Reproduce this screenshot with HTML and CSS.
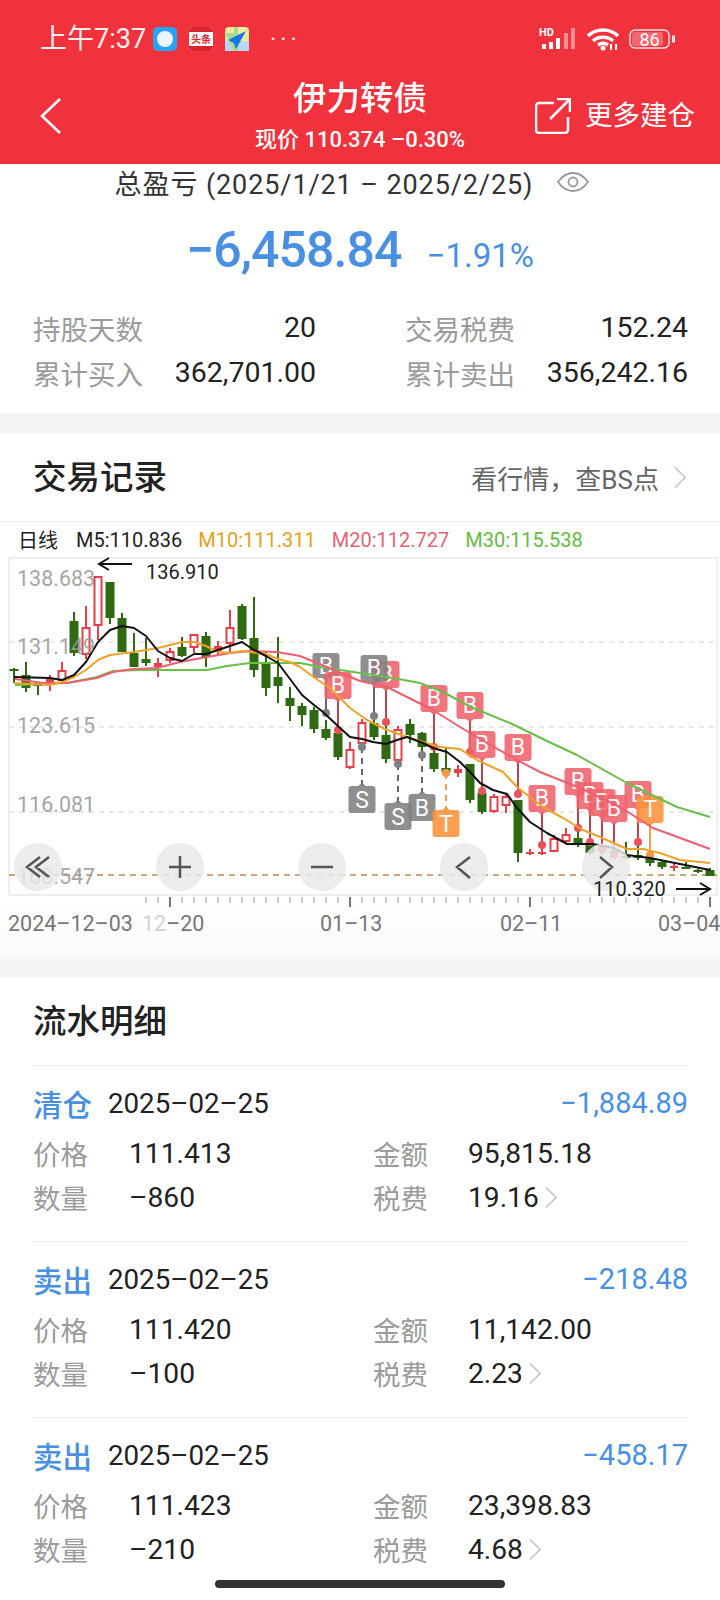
FILE: index.html
```html
<!DOCTYPE html>
<html lang="zh-CN">
<head>
<meta charset="utf-8">
<title>伊力转债</title>
<link rel="stylesheet" href="styles.css">
</head>
<body>
<header class="top">
  <div class="status">
    <span class="time">上午7:37</span>
    <svg class="app app-first" viewBox="0 0 24 24"><rect width="24" height="24" rx="5" fill="#29a3f5"/><circle cx="12" cy="12" r="8" fill="#eaf6ff"/></svg>
    <svg class="app" viewBox="0 0 24 24"><rect width="24" height="24" rx="4" fill="#fff"/><path class="tt" d="M0 4a4 4 0 0 1 4-4h16a4 4 0 0 1 4 4v1H0zM0 19h24v1a4 4 0 0 1-4 4H4a4 4 0 0 1-4-4z"/><text class="tt-label" x="12" y="16">头条</text></svg>
    <svg class="app" viewBox="0 0 24 24"><rect width="24" height="24" rx="4" fill="#f7e9a0"/><path d="M0 14h24v10H0z" fill="#b9d6f2"/><path d="M0 6l9 0 0-6 4 0 0 24-4 0z" fill="#9fdc8f"/><path d="M21 4L3 13l6 3 2 6z" fill="#1677e0"/></svg>
    <span class="dots">···</span>
    <div class="sys">
      <svg class="signal" viewBox="0 0 36 22"><text class="hd" x="-1" y="8">HD</text><path class="bar" d="M2 16h4v5H2zM9 14h4v7H9zM16 10h4v11h-4z"/><path class="bar-dim" d="M24 5h4v16h-4zM31 0h4v21h-4z"/></svg>
      <svg class="wifi" viewBox="0 0 34 24"><path class="wave" d="M2 9C10 1 24 1 32 9M7 14C12 9 22 9 27 14M12 18c3-2 7-2 10 0"/><circle cx="17" cy="21" r="2.5" fill="#fff"/><path class="wave-thin" d="M25 17v6M30 17v6"/></svg>
      <svg class="battery" viewBox="0 0 47 20"><rect class="bat-fill" x="3" y="3" width="31" height="14" rx="2"/><rect class="bat-box" x="1" y="1" width="39" height="18" rx="5"/><path class="bat-nub" d="M43 6.500h3v7h-3z"/><text class="bat-num" x="20.500" y="16.500">86</text></svg>
    </div>
  </div>
  <div class="nav">
    <div class="nav-left"><svg class="back" viewBox="0 0 22 36"><path d="M20 1L2 18l18 17"/></svg></div>
    <div class="nav-title"><div class="name">伊力转债</div><div class="quote">现价 110.374 –0.30%</div></div>
    <div class="nav-right"><svg class="share" viewBox="0 0 36 36"><path d="M19 5H4a3 3 0 0 0-3 3v24a3 3 0 0 0 3 3h26a3 3 0 0 0 3-3V19M15 21L34 2M22 1h13v13"/></svg><span class="more">更多建仓</span></div>
  </div>
</header>

<section class="summary">
  <div class="sum-title"><span>总盈亏 (2025/1/21 – 2025/2/25)</span><svg class="eye" viewBox="0 0 32 20"><path d="M1 10C6 3 11 1 16 1s10 2 15 9c-5 7-10 9-15 9S6 17 1 10z"/><circle cx="16" cy="10" r="4.500"/></svg></div>
  <div class="sum-value"><span class="big">−6,458.84</span><span class="pct">−1.91%</span></div>
  <div class="stats">
    <div class="stat"><span class="stat-k">持股天数</span><span class="stat-v">20</span></div>
    <div class="stat"><span class="stat-k">交易税费</span><span class="stat-v">152.24</span></div>
    <div class="stat"><span class="stat-k">累计买入</span><span class="stat-v">362,701.00</span></div>
    <div class="stat"><span class="stat-k">累计卖出</span><span class="stat-v">356,242.16</span></div>
  </div>
</section>
<div class="band"></div>

<section class="records">
  <div class="rec-head"><h2 class="h rec-h">交易记录</h2><div class="rec-link"><span>看行情，查BS点</span><svg class="chev" viewBox="0 0 14 24"><path d="M1 1l11 11L1 23"/></svg></div></div>
  <div class="legend"><span class="l-day">日线</span><span class="l-m5">M5:110.836</span><span class="l-m10">M10:111.311</span><span class="l-m20">M20:112.727</span><span class="l-m30">M30:115.538</span></div>
  <svg class="chart" viewBox="0 557 720 400">
    <rect class="frame" x="9" y="558" width="708" height="337"/>
    <path class="grid" d="M9 642H717M9 727H717M9 812H717"/>
    <path class="base" d="M9 875H717"/>
    <path class="ticks" d="M146 897v6M158 897v6M182 897v6M194 897v6M206 897v6M218 897v6M230 897v6M242 897v6M254 897v6M266 897v6M278 897v6M290 897v6M302 897v6M314 897v6M326 897v6M338 897v6M362 897v6M374 897v6M386 897v6M398 897v6M410 897v6M422 897v6M434 897v6M446 897v6M458 897v6M470 897v6M482 897v6M494 897v6M506 897v6M518 897v6M542 897v6M554 897v6M566 897v6M578 897v6M590 897v6M602 897v6M614 897v6M626 897v6M638 897v6M650 897v6M662 897v6M674 897v6M686 897v6M698 897v6"/>
    <path class="ticks-major" d="M170 897v10M350 897v10M530 897v10M710 897v10"/>
    <g class="axis-x">
      <text x="8" y="931">2024–12–03</text><text x="142" y="931"><tspan class="fade">12</tspan>–20</text><text x="320" y="931">01–13</text><text x="500" y="931">02–11</text><text x="658" y="931">03–04</text>
    </g>

    <path class="wick-g" d="M14 668V683M26 662V692M38 683V695M74 612V656M110 582V624M122 613V652M134 633V667M146 638V666M182 637V657M206 632V667M242 604V640M254 597V677M266 652V696M278 637V703M290 687V721M302 703V726M314 707V733M326 720V740M338 733V760M374 720V740M386 725V763M410 719V743M422 732V752M434 747V772M446 747V773M470 764V803M482 790V814M518 800V862M578 820V847M590 845V855M602 845V855M614 850V856M626 842V859M638 843V860M650 855V866M662 860V869M686 862V869M698 869V873M710 868V876"/>
    <path class="body-g" d="M9.500 669h9v2h-9zM21.500 675h9v13h-9zM33.500 683h9v3h-9zM69.500 621h9v32h-9zM105.500 582h9v36h-9zM117.500 618h9v34h-9zM129.500 653h9v14h-9zM141.500 659h9v4h-9zM177.500 647h9v9h-9zM201.500 636h9v21h-9zM237.500 606h9v33h-9zM249.500 638h9v32h-9zM261.500 664h9v24h-9zM273.500 677h9v9h-9zM285.500 698h9v8h-9zM297.500 706h9v9h-9zM309.500 710h9v19h-9zM321.500 729h9v9h-9zM333.500 733h9v24h-9zM369.500 723h9v14h-9zM381.500 735h9v24h-9zM405.500 724h9v11h-9zM417.500 733h9v14h-9zM429.500 753h9v16h-9zM441.500 768h9v4h-9zM465.500 764h9v36h-9zM477.500 793h9v19h-9zM513.500 800h9v53h-9zM573.500 838h9v6h-9zM585.500 845h9v8h-9zM597.500 849h9v2h-9zM609.500 851h9v2h-9zM621.500 856h9v2h-9zM633.500 855h9v3h-9zM645.500 858h9v5h-9zM657.500 862h9v5h-9zM681.500 867h9v2h-9zM693.500 870h9v2h-9zM705.500 870h9v6h-9z"/>
    <path class="wick-r" d="M50 675V691M62 662V683M86 606V659M98 577V640M158 658V677M170 648V663M194 634V653M218 641V655M230 610V653M350 742V769M362 719V747M398 726V767M458 765V777M494 794V813M506 794V813M530 849V855M542 845V855M554 835V852M566 828V843M674 863V871"/>
    <path class="body-r" d="M46 679h8v5h-8zM154 663h8v4h-8zM214 646h8v5h-8zM454 769h8v4h-8zM526 852h8v2h-8zM538 852h8v2h-8zM670 866h8v2h-8z"/>
    <path class="hollow" d="M58.500 671h7v9h-7zM82.500 628h7v26h-7zM94.500 577h7v48h-7zM166.500 652h7v8h-7zM190.500 635h7v12h-7zM226.500 628h7v15h-7zM346.500 750h7v17h-7zM358.500 723h7v20h-7zM394.500 730h7v30h-7zM490.500 797h7v14h-7zM502.500 797h7v8h-7zM550.500 839h7v12h-7zM562.500 835h7v6h-7z"/>

    <path class="stem-r" d="M338 698V730M386 688V722M434 712V747M470 719V752M482 758V791M518 761V794M542 812V845M578 795V828M590 808V842M602 815V849M614 822V855M638 808V842"/>
    <path class="stem-k" d="M326 678V713M374 682V716"/>
    <path class="stem-k dash" d="M362 747V786M398 764V803M422 755V794"/>
    <path class="stem-o" d="M650 823V855"/>
    <path class="stem-o dash" d="M446 773V810"/>
    <g class="dot-r"><circle cx="338" cy="730" r="4"/><circle cx="386" cy="722" r="4"/><circle cx="434" cy="747" r="4"/><circle cx="470" cy="752" r="4"/><circle cx="482" cy="791" r="4"/><circle cx="518" cy="794" r="4"/><circle cx="542" cy="845" r="4"/><circle cx="578" cy="828" r="4"/><circle cx="590" cy="842" r="4"/><circle cx="602" cy="849" r="4"/><circle cx="614" cy="855" r="4"/><circle cx="638" cy="842" r="4"/></g>
    <g class="dot-k"><circle cx="326" cy="713" r="4"/><circle cx="374" cy="716" r="4"/><circle cx="362" cy="747" r="4"/><circle cx="398" cy="764" r="4"/><circle cx="422" cy="755" r="4"/></g>
    <g class="dot-o"><circle cx="446" cy="773" r="4"/><circle cx="650" cy="855" r="4"/></g>

    <g class="mk mk-r"><rect x="372.500" y="661" width="27" height="27" rx="3"/><path d="M382 688h8l-4 3z"/><text x="386" y="682">B</text></g>
    <g class="mk mk-k"><rect x="312.500" y="653" width="27" height="25" rx="3"/><path d="M322 678h8l-4 3z"/><text x="326" y="674">B</text></g>
    <g class="mk mk-r"><rect x="324.500" y="672" width="27" height="27" rx="3"/><path d="M334 699h8l-4 3z"/><text x="338" y="693">B</text></g>
    <g class="mk mk-k"><rect x="360.500" y="655" width="27" height="27" rx="3"/><path d="M370 682h8l-4 3z"/><text x="374" y="676">B</text></g>
    <g class="mk mk-r"><rect x="420.500" y="685" width="27" height="27" rx="3"/><path d="M430 712h8l-4 3z"/><text x="434" y="706">B</text></g>
    <g class="mk mk-r"><rect x="456.500" y="692" width="27" height="27" rx="3"/><path d="M466 719h8l-4 3z"/><text x="470" y="713">B</text></g>
    <g class="mk mk-r"><rect x="468.500" y="731" width="27" height="27" rx="3"/><path d="M478 758h8l-4 3z"/><text x="482" y="752">B</text></g>
    <g class="mk mk-r"><rect x="504.500" y="734" width="27" height="27" rx="3"/><path d="M514 761h8l-4 3z"/><text x="518" y="755">B</text></g>
    <g class="mk mk-r"><rect x="528.500" y="785" width="27" height="27" rx="3"/><path d="M538 812h8l-4 3z"/><text x="542" y="806">B</text></g>
    <g class="mk mk-r"><rect x="564.500" y="768" width="27" height="27" rx="3"/><path d="M574 795h8l-4 3z"/><text x="578" y="789">B</text></g>
    <g class="mk mk-r"><rect x="576.500" y="782" width="27" height="27" rx="3"/><path d="M586 809h8l-4 3z"/><text x="590" y="803">B</text></g>
    <g class="mk mk-r"><rect x="588.500" y="789" width="27" height="27" rx="3"/><path d="M598 816h8l-4 3z"/><text x="602" y="810">B</text></g>
    <g class="mk mk-r"><rect x="600.500" y="795" width="27" height="27" rx="3"/><path d="M610 822h8l-4 3z"/><text x="614" y="816">B</text></g>
    <g class="mk mk-r"><rect x="624.500" y="781" width="27" height="27" rx="3"/><path d="M634 808h8l-4 3z"/><text x="638" y="802">B</text></g>
    <g class="mk mk-o"><rect x="636.500" y="796" width="27" height="27" rx="3"/><path d="M646 823h8l-4 3z"/><text x="650" y="817">T</text></g>
    <g class="mk mk-k"><rect x="348.500" y="786" width="27" height="27" rx="3"/><path d="M358 786h8l-4-3z"/><text x="362" y="808">S</text></g>
    <g class="mk mk-k"><rect x="384.500" y="803" width="27" height="27" rx="3"/><path d="M394 803h8l-4-3z"/><text x="398" y="825">S</text></g>
    <g class="mk mk-k"><rect x="408.500" y="794" width="27" height="27" rx="3"/><path d="M418 794h8l-4-3z"/><text x="422" y="816">B</text></g>
    <g class="mk mk-o"><rect x="432.500" y="810" width="27" height="27" rx="3"/><path d="M442 810h8l-4-3z"/><text x="446" y="832">T</text></g>

    <polyline class="ma ma30" points="15,685 43,684 67,683 97,677 113,671 140,670 207,670 227,666 250,663 300,663 320,667 360,673 393,678 420,683 443,692 473,708 510,723 547,741 577,755 627,783 677,807 710,817"/>
    <polyline class="ma ma20" points="15,679 43,683 67,683 97,678 113,672 133,669 157,668 180,662 207,657 230,653 250,651 277,652 300,656 327,667 360,681 387,687 433,710 460,727 487,743 517,760 540,772 580,788 620,807 653,828 710,849"/>
    <polyline class="ma ma10" points="14,683 50,685 62,682 74,677 86,670 98,660 110,655 134,652 158,648 182,642 194,642 206,646 218,652 230,653 242,651 266,654 278,659 290,662 300,667 315,678 330,688 340,698 350,708 367,720 387,730 407,737 423,742 440,747 460,749 477,760 503,772 518,788 543,807 563,818 583,830 600,837 627,849 643,849 660,853 680,860 710,863"/>
    <polyline class="ma ma5" points="14,677 50,678 62,680 74,675 86,662 98,642 110,630 122,626 134,628 146,636 158,651 170,658 182,661 194,654 206,654 218,650 230,646 242,642 254,650 266,656 278,663 290,679 302,695 314,705 323,712 340,728 350,737 362,739 373,742 386,744 397,740 407,737 423,743 433,748 447,752 460,762 470,772 480,783 493,790 507,794 517,808 530,822 547,833 567,844 593,844 613,848 627,855 650,858 680,864 710,870"/>

    <g class="axis-y">
      <text x="17" y="586">138.683</text><text x="17" y="654">131.149</text><text x="17" y="733">123.615</text><text x="17" y="812">116.081</text><text x="17" y="884">108.547</text>
    </g>

    <g class="btn"><circle cx="38" cy="867" r="24"/><circle cx="180" cy="867" r="24"/><circle cx="322" cy="867" r="24"/><circle cx="464" cy="867" r="24"/><circle cx="606" cy="867" r="24"/></g>
    <path class="btn-i" d="M40 857L27 867l13 10M49 857L36 867l13 10M169 867h22M180 856v22M311 867h22M470 857L457 867l13 11M600 857L612 867l-12 11"/>

    <path class="arrow" d="M132 564H99M109 558L99 564l10 6"/>
    <text class="note" x="146" y="579">136.910</text>
    <path class="arrow" d="M676 889H710M700 883L710 889l-10 6"/>
    <text class="note" x="593" y="896">110.320</text>
  </svg>
</section>
<div class="band"></div>

<section class="details">
  <h2 class="h details-h">流水明细</h2>
  <article class="item">
    <div class="item-head"><span class="kind">清仓</span><span class="date">2025–02–25</span><span class="gain">−1,884.89</span></div>
    <div class="kv"><span class="k">价格</span><span class="v">111.413</span><span class="k">金额</span><span class="v">95,815.18</span><span class="k">数量</span><span class="v">–860</span><span class="k">税费</span><span class="v">19.16<svg class="chev chev-s" viewBox="0 0 14 24"><path d="M1 1l11 11L1 23"/></svg></span></div>
  </article>
  <article class="item">
    <div class="item-head"><span class="kind">卖出</span><span class="date">2025–02–25</span><span class="gain">−218.48</span></div>
    <div class="kv"><span class="k">价格</span><span class="v">111.420</span><span class="k">金额</span><span class="v">11,142.00</span><span class="k">数量</span><span class="v">–100</span><span class="k">税费</span><span class="v">2.23<svg class="chev chev-s" viewBox="0 0 14 24"><path d="M1 1l11 11L1 23"/></svg></span></div>
  </article>
  <article class="item">
    <div class="item-head"><span class="kind">卖出</span><span class="date">2025–02–25</span><span class="gain">−458.17</span></div>
    <div class="kv"><span class="k">价格</span><span class="v">111.423</span><span class="k">金额</span><span class="v">23,398.83</span><span class="k">数量</span><span class="v">–210</span><span class="k">税费</span><span class="v">4.68<svg class="chev chev-s" viewBox="0 0 14 24"><path d="M1 1l11 11L1 23"/></svg></span></div>
  </article>
</section>
<div class="home"></div>
</body>
</html>
```

FILE: styles.css
```css
* { box-sizing: border-box; }
html, body { margin: 0; padding: 0; }
body {
  position: relative;
  width: 720px;
  height: 1600px;
  overflow: hidden;
  background: #fff;
  color: #222;
  font-family: Roboto, "Noto Sans CJK SC", sans-serif;
}

/* header */
.top { height: 164px; background: #f0323c; color: #fff; }
.status { display: flex; align-items: center; height: 78px; padding: 0 44px 0 40px; }
.time { font-size: 27px; line-height: 30px; width: 106px; white-space: nowrap; opacity: .92; }
.app { width: 24px; height: 24px; margin-left: 12px; }
.app-first { margin-left: 7px; }
.tt { fill: #d9232d; }
.tt-label { font-size: 10px; font-weight: 700; fill: #d9232d; text-anchor: middle; }
.dots { margin-left: 21px; font-size: 24px; letter-spacing: 4px; opacity: .9; }
.sys { display: flex; align-items: center; margin-left: auto; }
.signal { width: 36px; height: 22px; margin-right: 10px; overflow: visible; }
.hd { font-size: 11px; font-weight: 700; fill: #fff; }
.bar { fill: #fff; }
.bar-dim { fill: #fff; opacity: .45; }
.wifi { width: 34px; height: 24px; margin-right: 9px; }
.wave { fill: none; stroke: #fff; stroke-width: 3.5; }
.wave-thin { fill: none; stroke: #fff; stroke-width: 2; }
.battery { width: 47px; height: 20px; }
.bat-fill { fill: #fff; opacity: .25; }
.bat-box { fill: none; stroke: #fff; stroke-width: 1.500; opacity: .85; }
.bat-nub { fill: #fff; opacity: .85; }
.bat-num { font-size: 18px; fill: #fff; text-anchor: middle; }
.nav { display: grid; grid-template-columns: 1fr 240px 1fr; height: 86px; }
.nav-left { padding: 20px 0 0 40px; }
.back { display: block; width: 22px; height: 36px; fill: none; stroke: #fff; stroke-width: 2.500; }
.nav-title { text-align: center; padding-top: 1px; }
.name { font-size: 33.500px; font-weight: 500; line-height: 40px; }
.quote { font-size: 22px; font-weight: 500; line-height: 24px; margin-top: 9px; white-space: nowrap; }
.nav-right { display: flex; align-items: flex-start; padding: 20px 0 0 55px; }
.share { width: 36px; height: 36px; flex: none; fill: none; stroke: #fff; stroke-width: 2.500; }
.more { font-size: 27.500px; line-height: 36px; margin-left: 14px; white-space: nowrap; }

/* summary */
.summary { padding-bottom: 18px; }
.sum-title { display: flex; align-items: center; justify-content: center; gap: 24px; height: 36px; padding-right: 16px; font-size: 27px; letter-spacing: .9px; color: #333; }
.eye { width: 32px; height: 20px; fill: none; stroke: #999; stroke-width: 1.800; }
.sum-value { display: flex; align-items: baseline; justify-content: center; gap: 25px; height: 96px; padding-top: 20px; color: #4a90e2; }
.big { font-size: 50px; font-weight: 500; line-height: 60px; letter-spacing: -.9px; }
.pct { font-size: 33px; }
.stats { display: grid; grid-template-columns: 283px 283px; justify-content: space-between; padding: 9px 32px 0 33px; }
.stat { display: flex; justify-content: space-between; align-items: center; height: 45px; }
.stat-k { font-size: 27.500px; color: #9b9b9b; }
.stat-v { font-size: 28.500px; color: #222; }
.band { height: 20px; background: #f4f4f4; }

/* records */
.rec-head { display: flex; justify-content: space-between; align-items: center; height: 89px; padding: 0 33px; border-bottom: 1px solid #eee; }
.h { margin: 0; font-size: 33.500px; font-weight: 500; color: #222; }
.rec-h { margin-top: -5px; }
.rec-link { display: flex; align-items: center; gap: 15px; font-size: 26px; color: #666; }
.chev { width: 13px; height: 23px; fill: none; stroke: #c8c8c8; stroke-width: 1.800; }
.legend { display: flex; align-items: center; gap: 16px; height: 35px; padding-left: 18px; font-size: 20px; color: #222; white-space: nowrap; }
.l-day { margin-right: 2px; }
.l-m10 { color: #e8a020; }
.l-m20 { color: #e46478; }
.l-m30 { color: #66bb44; }
.chart { display: block; width: 720px; height: 400px; background: linear-gradient(#fff 85%, #fafafa); }
.frame { fill: #fff; stroke: #eee; stroke-width: 2; }
.grid { stroke: #e8e8e8; stroke-width: 2; stroke-dasharray: 5 5; fill: none; }
.base { stroke: #c8a778; stroke-width: 2; stroke-dasharray: 6 5; fill: none; }
.axis-y text { font-size: 21.500px; fill: #999; fill-opacity: .9; }
.axis-x text { font-size: 21.500px; fill: #777; }
.fade { fill: #d2d2d2; }
.ticks { stroke: #bbb; stroke-width: 1.500; }
.ticks-major { stroke: #777; stroke-width: 2; }
.wick-g { stroke: #2f6a12; stroke-width: 2; fill: none; }
.body-g { fill: #2f6a12; }
.wick-r { stroke: #e5404a; stroke-width: 2; fill: none; }
.body-r { fill: #e5404a; }
.hollow { fill: #fff; stroke: #e5404a; stroke-width: 2; }
.stem-r { stroke: #b5474e; stroke-width: 2; fill: none; }
.stem-k { stroke: #666; stroke-width: 2; fill: none; }
.stem-o { stroke: #f0a050; stroke-width: 2; fill: none; }
.dash { stroke-dasharray: 6 5; }
.dot-r { fill: #ee5058; }
.dot-k { fill: #808080; }
.dot-o { fill: #f59a40; }
.mk { opacity: .88; }
.mk text { font-size: 23px; fill: #fff; text-anchor: middle; }
.mk-r { fill: #f0626a; }
.mk-k { fill: #808080; }
.mk-o { fill: #ff923c; }
.ma { fill: none; stroke-width: 2; stroke-linejoin: round; }
.ma5 { stroke: #111; }
.ma10 { stroke: #eda228; }
.ma20 { stroke: #ee5f72; }
.ma30 { stroke: #68c04a; }
.btn { fill: #e9e9e9; opacity: .85; }
.btn-i { fill: none; stroke: #555; stroke-width: 2.500; }
.arrow { fill: none; stroke: #111; stroke-width: 2; }
.note { font-size: 20px; fill: #222; }

/* details */
.details { padding: 0 32px 0 33px; }
.details-h { height: 88px; line-height: 90px; }
.item { height: 176px; padding-top: 19px; border-top: 1px solid #eee; }
.item-head { display: flex; align-items: center; height: 36px; margin-bottom: 10px; }
.kind { font-size: 29.500px; width: 75px; color: #4a90e2; font-weight: 500; white-space: nowrap; }
.date { font-size: 27.700px; color: #222; }
.gain { margin-left: auto; font-size: 29px; color: #4a90e2; }
.kv { display: grid; grid-template-columns: 96px 244px 95px 1fr; grid-auto-rows: 44px; align-items: center; }
.k { font-size: 27.500px; color: #9b9b9b; }
.v { display: flex; align-items: center; font-size: 28.200px; color: #222; }
.chev-s { margin-left: 6px; }

.home { position: absolute; left: 215px; top: 1580px; width: 290px; height: 8px; border-radius: 4px; background: #333; }
```
